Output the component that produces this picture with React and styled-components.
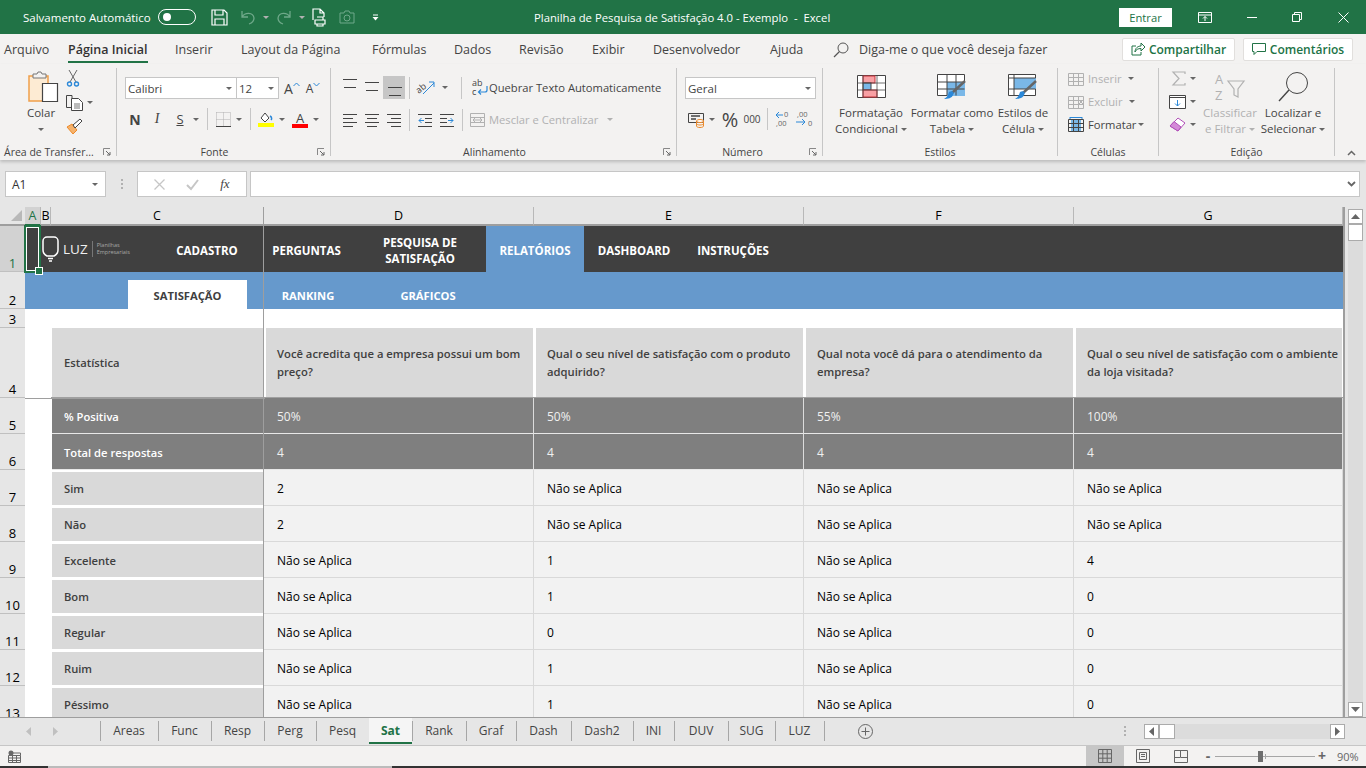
import React from 'react';
import styled, { createGlobalStyle } from 'styled-components';

const GREEN = '#217346';
const UI_FONT = '"Open Sans", "Noto Sans", sans-serif';

const GlobalStyle = createGlobalStyle`
  html, body { margin: 0; padding: 0; background: #e6e6e6; }
  * { box-sizing: border-box; }
  body { font-family: ${UI_FONT}; overflow: hidden; }
`;

const Page = styled.div`
  width: 1366px;
  height: 768px;
  display: flex;
  flex-direction: column;
  overflow: hidden;
`;

/* title bar */
const TitleBar = styled.div`
  height: 34px;
  background: ${GREEN};
  color: #fff;
  display: flex;
  align-items: center;
  font-size: 11.5px;
  flex: none;
`;
const AutoSave = styled.span`
  margin-left: 23px;
  width: 135px;
  flex: none;
  white-space: nowrap;
`;
const Toggle = styled.span`
  width: 38px;
  height: 16px;
  flex: none;
  border: 1px solid #fff;
  border-radius: 8px;
  display: flex;
  align-items: center;
  padding-left: 4px;
  &::before {
    content: '';
    width: 8px;
    height: 8px;
    border-radius: 50%;
    background: #fff;
  }
`;
const QuickSlot = styled.span`
  width: ${p => p.$w}px;
  display: flex;
  align-items: center;
  justify-content: center;
  flex: none;
`;
const Title = styled.span`
  width: 585px;
  flex: none;
  font-size: 11.3px;
  white-space: pre;
`;
const SignIn = styled.span`
  width: 53px;
  height: 19px;
  flex: none;
  background: #fff;
  color: ${GREEN};
  font-size: 11.2px;
  display: flex;
  align-items: center;
  justify-content: center;
`;

/* menu tabs */
const MenuBar = styled.div`
  height: 30px;
  background: #f3f2f1;
  display: flex;
  align-items: center;
  padding-left: 4px;
  flex: none;
  font-size: 12.5px;
  color: #444;
`;
const MenuItem = styled.span`
  width: ${p => p.$w}px;
  height: 30px;
  flex: none;
  white-space: nowrap;
  line-height: 32px;
  position: relative;
  ${p => p.$active && `
    color: #333;
    font-weight: 600;
    &::after {
      content: '';
      position: absolute;
      left: 0;
      bottom: 1px;
      width: 80px;
      height: 2px;
      background: ${GREEN};
    }
  `}
`;
const SearchHint = styled.span`
  display: flex;
  align-items: center;
  gap: 10px;
  width: 289px;
  flex: none;
  padding-top: 1px;
  white-space: nowrap;
`;
const PillButton = styled.span`
  width: ${p => p.$w}px;
  height: 23px;
  margin-right: 8px;
  background: #fff;
  border: 1px solid #e1dfdd;
  border-radius: 2px;
  color: ${GREEN};
  font-size: 12px;
  font-weight: 600;
  display: flex;
  align-items: center;
  justify-content: center;
  gap: 4px;
  flex: none;
`;

/* ribbon */
const Ribbon = styled.div`
  height: 96px;
  background: #f3f2f1;
  padding-top: 4px;
  display: flex;
  flex: none;
  position: relative;
  box-shadow: 0 2px 3px rgba(0, 0, 0, 0.18);
  z-index: 2;
`;
const Group = styled.div`
  width: ${p => p.$w}px;
  height: 88px;
  flex: none;
  position: relative;
  border-right: ${p => (p.$last ? 'none' : '1px solid #c6c6c6')};
  padding-left: ${p => p.$pad || 0}px;
`;
const Body = styled.div`
  height: 76px;
  display: flex;
  flex-direction: ${p => (p.$column ? 'column' : 'row')};
  ${p => p.$column && `gap: 9px; padding-top: ${p.$top || 9}px;`}
`;
const GroupLabel = styled.div`
  position: absolute;
  left: 0;
  right: 0;
  top: 76px;
  text-align: ${p => (p.$left ? 'left' : 'center')};
  padding-left: ${p => (p.$left ? '4px' : '0')};
  padding-right: ${p => p.$pr || 0}px;
  font-size: 10.5px;
  line-height: 16px;
  color: #444;
  white-space: nowrap;
`;
const Launcher = styled.span`
  position: absolute;
  right: ${p => p.$r || 5}px;
  top: 80px;
  width: 8px;
  height: 8px;
  display: flex;
`;
const Row = styled.div`
  display: flex;
  align-items: center;
  height: ${p => p.$h || 22}px;
`;
const Slot = styled.span`
  width: ${p => p.$w}px;
  height: ${p => p.$h || 22}px;
  flex: none;
  display: flex;
  align-items: center;
  justify-content: center;
  background: ${p => (p.$on ? '#c6c6c6' : 'transparent')};
  color: #444;
`;
const Separator = styled.span`
  width: ${p => p.$w}px;
  height: 22px;
  flex: none;
  display: flex;
  justify-content: center;
  &::before {
    content: '';
    width: 1px;
    height: 100%;
    background: #c6c6c6;
  }
`;
const Caret = styled.span`
  width: ${p => p.$w || 10}px;
  flex: none;
  display: flex;
  justify-content: center;
  &::before {
    content: '';
    border-left: 3px solid transparent;
    border-right: 3px solid transparent;
    border-top: 3px solid ${p => (p.$dim ? '#b1b1b1' : '#666')};
  }
`;
const Select = styled.span`
  width: ${p => p.$w}px;
  height: 22px;
  flex: none;
  margin-left: ${p => p.$ml || 0}px;
  background: #fff;
  border: 1px solid #c6c6c6;
  display: flex;
  align-items: center;
  padding-left: 2px;
  font-size: 11.5px;
  color: #444;
  span:first-child { flex: 1; }
`;
const ToolText = styled.span`
  font-size: ${p => p.$size || 11.2}px;
  color: ${p => (p.$dim ? '#b1b1b1' : '#444')};
  font-weight: ${p => (p.$bold ? 700 : 400)};
  font-style: ${p => (p.$italic ? 'italic' : 'normal')};
  text-decoration: ${p => (p.$under ? 'underline' : 'none')};
  font-family: ${p => (p.$serif ? '"Liberation Serif", serif' : 'inherit')};
  white-space: nowrap;
  margin-left: ${p => p.$ml || 0}px;
`;
const BigButton = styled.div`
  width: ${p => p.$w}px;
  flex: none;
  display: flex;
  flex-direction: column;
  align-items: center;
  font-size: 11.5px;
  line-height: 16px;
  color: ${p => (p.$dim ? '#b1b1b1' : '#444')};
  white-space: nowrap;
`;
const BigIcon = styled.div`
  height: 37px;
  padding-left: ${p => p.$shift || 0}px;
  display: flex;
  align-items: center;
  justify-content: center;
`;
const Label = styled.span`
  display: flex;
  align-items: center;
  gap: 3px;
  height: 16px;
`;
const StackColumn = styled.div`
  width: ${p => p.$w}px;
  flex: none;
  display: flex;
  flex-direction: column;
  gap: ${p => p.$gap || 2}px;
`;
const StackRow = styled.div`
  height: 21px;
  display: flex;
  align-items: center;
  padding-left: ${p => p.$pad || 0}px;
`;
const Collapse = styled.span`
  position: absolute;
  right: 10px;
  bottom: 4px;
  display: flex;
`;

/* formula bar */
const FormulaBar = styled.div`
  height: 47px;
  padding: 11px 6px 10px 5px;
  display: flex;
  background: #e6e6e6;
  flex: none;
`;
const NameBox = styled.div`
  width: 101px;
  height: 26px;
  background: #fff;
  border: 1px solid #c6c6c6;
  display: flex;
  align-items: center;
  justify-content: space-between;
  padding: 0 6px 0 6px;
  font-size: 12px;
  color: #333;
`;
const Grip = styled.div`
  width: ${p => p.$w || 31}px;
  height: ${p => p.$h || 26}px;
  flex: none;
  display: flex;
  flex-direction: column;
  align-items: center;
  justify-content: center;
  gap: 2px;
  span { width: 2px; height: 2px; background: #b1b1b1; }
`;
const FxBox = styled.div`
  width: 110px;
  height: 26px;
  background: #fff;
  border: 1px solid #c6c6c6;
  display: flex;
  align-items: center;
  justify-content: space-around;
  padding: 0 6px;
`;
const FormulaInput = styled.div`
  flex: 1;
  height: 26px;
  margin-left: 3px;
  background: #fff;
  border: 1px solid #c6c6c6;
  display: flex;
  align-items: center;
  justify-content: flex-end;
  padding-right: 3px;
`;

/* sheet */
const SheetArea = styled.div`
  height: 510px;
  display: flex;
  flex: none;
`;
const SheetClip = styled.div`
  width: 1345px;
  height: 510px;
  overflow: hidden;
  position: relative;
  flex: none;
  border-right: 2px solid #9e9e9e;
`;
const Grid = styled.div`
  display: grid;
  grid-template-columns: 25px 16px 10px 213px 270px 270px 270px 269px;
  grid-template-rows: 19px 46px 37px 19px 70px repeat(9, 36px);
  font-size: 12px;
  background: #fff;
`;
const ColHead = styled.div`
  background: ${p => (p.$on ? '#d2d2d2' : '#e6e6e6')};
  color: ${p => (p.$on ? GREEN : '#000')};
  border-bottom: 2px solid ${p => (p.$on ? GREEN : '#9e9e9e')};
  border-right: 1px solid #b8b8b8;
  font-size: 12.5px;
  display: flex;
  align-items: center;
  justify-content: center;
  position: relative;
`;
const Corner = styled.div`
  background: #e6e6e6;
  border-bottom: 2px solid #9e9e9e;
  display: flex;
  align-items: flex-end;
  justify-content: flex-end;
  padding: 0 3px 3px 0;
  &::before {
    content: '';
    border-left: 11px solid transparent;
    border-bottom: 11px solid #b8b8b8;
  }
`;
const RowHead = styled.div`
  background: ${p => (p.$on ? '#d2d2d2' : '#e6e6e6')};
  color: ${p => (p.$on ? GREEN : '#000')};
  border-bottom: 1px solid #c0c0c0;
  font-size: 13px;
  line-height: 15px;
  display: flex;
  align-items: flex-end;
  justify-content: center;
`;
const Nav = styled.div`
  grid-column: 2 / -1;
  background: #404040;
  display: flex;
  color: #fff;
  font-weight: 700;
  font-size: 11.5px;
`;
const NavItem = styled.div`
  width: ${p => p.$w}px;
  padding-right: ${p => p.$pr || 0}px;
  padding-top: 4px;
  flex: none;
  display: flex;
  align-items: center;
  justify-content: center;
  text-align: center;
  line-height: 16px;
  background: ${p => (p.$on ? '#6699cc' : 'transparent')};
`;
const LogoWrap = styled.div`
  width: 120px;
  padding-left: 17px;
  flex: none;
  display: flex;
  align-items: center;
  gap: 4px;
`;
const LogoWord = styled.span`
  font-size: 13.5px;
  font-weight: 400;
  color: #f0f0f0;
  padding-right: 4px;
  border-right: 1px solid #777;
  line-height: 16px;
`;
const LogoSub = styled.span`
  font-size: 5.5px;
  line-height: 7px;
  font-weight: 400;
  color: #a8a8a8;
`;
const SubNav = styled.div`
  grid-column: 2 / -1;
  background: #6699cc;
  display: flex;
  align-items: flex-end;
  padding-left: 103px;
  color: #fff;
  font-weight: 700;
  font-size: 11.2px;
`;
const SubTab = styled.div`
  width: 120px;
  height: 29px;
  padding-top: 2px;
  display: flex;
  align-items: center;
  justify-content: center;
  ${p => p.$on && 'background: #fff; color: #404040; width: 119px; margin-right: 1px;'}
`;
const Blank = styled.div`
  background: #fff;
  grid-column: ${p => p.$span || 'auto'};
`;
const HeadCell = styled.div`
  background: #d9d9d9;
  border: solid #fff;
  border-width: 0 1px 0 ${p => (p.$first ? '0' : '2px')};
  color: #404040;
  font-size: 11.25px;
  font-weight: 600;
  padding: 0 3px 0 ${p => (p.$first ? '12px' : '11px')};
  display: flex;
  align-items: center;
  line-height: 18px;
`;
const HeadWrap = styled.div`
  grid-column: ${p => p.$col};
  border-bottom: 1px solid #a0a0a0;
  display: flex;
  background: #fff;
  padding-left: ${p => p.$pad || 0}px;
  & > div { flex: 1; }
`;
const StatCell = styled.div`
  background: #7f7f7f;
  color: ${p => (p.$label ? '#fff' : '#f0f0f0')};
  font-size: ${p => (p.$label ? '11.2px' : '12px')};
  font-weight: ${p => (p.$label ? 600 : 400)};
  border-bottom: 1px solid #e8e8e8;
  border-right: ${p => (p.$label ? 'none' : '1px solid #dcdcdc')};
  margin-left: ${p => (p.$label ? '1px' : '0')};
  padding: 2px 0 0 ${p => (p.$label ? '12px' : '13px')};
  display: flex;
  align-items: center;
  grid-column: ${p => (p.$label ? '4' : 'auto')};
`;
const RowLabel = styled.div`
  grid-column: 4;
  margin-left: 1px;
  background: #d9d9d9;
  border-top: 2px solid #fff;
  border-bottom: 1px solid #fff;
  color: #404040;
  font-size: 11.2px;
  font-weight: 600;
  padding-left: 12px;
  display: flex;
  align-items: center;
`;
const ValueCell = styled.div`
  background: #f2f2f2;
  border-bottom: 1px solid #d9d9d9;
  border-right: 1px solid #d9d9d9;
  color: #000;
  padding: 2px 0 0 13px;
  display: flex;
  align-items: center;
`;
const FreezeV = styled.div`
  position: absolute;
  left: 263px;
  top: 0;
  bottom: 0;
  width: 1px;
  background: #9e9e9e;
`;
const FreezeH = styled.div`
  position: absolute;
  left: 25px;
  top: 191px;
  width: 240px;
  height: 1px;
  background: #9e9e9e;
`;
const CellCursor = styled.div`
  position: absolute;
  left: 24px;
  top: 18px;
  width: 17px;
  height: 48px;
  border: 2px solid ${GREEN};
  box-shadow: inset 0 0 0 1px #fff;
  &::after {
    content: '';
    position: absolute;
    right: -4px;
    bottom: -4px;
    width: 6px;
    height: 6px;
    background: ${GREEN};
    border: 1px solid #fff;
  }
`;
const VScroll = styled.div`
  width: 21px;
  height: 510px;
  background: #e6e6e6;
  padding: 2px 3px 0 3px;
  display: flex;
  flex-direction: column;
  flex: none;
`;
const ScrollBtn = styled.div`
  width: ${p => p.$w || 15}px;
  height: ${p => p.$h || 15}px;
  background: #fff;
  border: 1px solid #ababab;
  flex: none;
  display: flex;
  align-items: center;
  justify-content: center;
`;
const ScrollFill = styled.div`
  flex: 1;
  background: #dcdcdc;
`;

/* sheet tabs */
const TabsBar = styled.div`
  height: 28px;
  background: #e6e6e6;
  border-top: 1px solid #9e9e9e;
  display: flex;
  align-items: flex-start;
  flex: none;
  font-size: 12px;
  color: #444;
`;
const TabArrows = styled.div`
  width: 100px;
  height: 26px;
  flex: none;
  display: flex;
  align-items: center;
  padding-left: 26px;
  gap: 22px;
`;
const SheetTab = styled.div`
  width: ${p => p.$w}px;
  height: 26px;
  flex: none;
  padding-bottom: 2px;
  display: flex;
  align-items: center;
  justify-content: center;
  position: relative;
  ${p => p.$on
    ? `background: #f5f5f5; color: ${GREEN}; font-weight: 700; border-bottom: 2px solid ${GREEN}; padding-bottom: 0;`
    : `&::before {
        content: '';
        position: absolute;
        left: 0;
        top: 3px;
        height: 20px;
        width: 1px;
        background: #a6a6a6;
      }`}
`;
const TabEnd = styled.div`
  width: 1px;
  height: 20px;
  margin-top: 3px;
  background: #a6a6a6;
  flex: none;
`;
const AddSheet = styled.div`
  width: 280px;
  height: 26px;
  padding-left: 33px;
  display: flex;
  align-items: center;
  flex: none;
`;
const HScroll = styled.div`
  height: 15px;
  margin-top: 6px;
  display: flex;
  width: 201px;
  flex: none;
`;

/* status bar */
const StatusBar = styled.div`
  height: 21px;
  background: #f3f2f1;
  border-top: 1px solid #c6c6c6;
  display: flex;
  align-items: center;
  padding-left: 8px;
  flex: none;
`;
const ViewBtn = styled.span`
  width: 38px;
  height: 20px;
  display: flex;
  align-items: center;
  justify-content: center;
  background: ${p => (p.$on ? '#c6c6c6' : 'transparent')};
  flex: none;
`;
const ZoomTrack = styled.span`
  width: 100px;
  height: 1px;
  background: #a6a6a6;
  margin: 0 3px;
  position: relative;
  flex: none;
  &::before {
    content: '';
    position: absolute;
    left: 43px;
    top: -5px;
    width: 5px;
    height: 11px;
    background: #6e6e6e;
  }
  &::after {
    content: '';
    position: absolute;
    left: 50px;
    top: -2px;
    width: 1px;
    height: 5px;
    background: #a6a6a6;
  }
`;
const ZoomSign = styled.span`
  width: 8px;
  font-size: 14px;
  font-weight: 700;
  color: #666;
  display: flex;
  justify-content: center;
  line-height: 14px;
  flex: none;
`;
const ZoomText = styled.span`
  font-size: 11px;
  color: #666;
  margin-left: 11px;
  flex: none;
`;
const Taskbar = styled.div`
  height: 2px;
  flex: none;
  background: linear-gradient(to right, #333 48px, #bbb 48px, #bbb 392px, #333 392px);
`;

/* ribbon and chrome icons */
const Svg = ({ w, h, children, style, ...rest }) => (
  <svg width={w} height={h} viewBox={`0 0 ${w} ${h}`} fill="none" style={{ display: 'block', flex: 'none', overflow: 'visible', ...style }} {...rest}>
    {children}
  </svg>
);
const L = ({ ys, xs, c = '#444' }) => ys.map((y, i) => (
  <line key={y} x1={xs[i][0]} x2={xs[i][1]} y1={y + 0.5} y2={y + 0.5} stroke={c} />
));

const SaveIcon = () => (
  <Svg w={17} h={17}><path d="M1 1h12l3 3v12H1z M4 1v5h8V1 M4 16v-6h9v6" stroke="#fff" strokeWidth="1.2" /></Svg>
);
const UndoIcon = ({ flip }) => (
  <Svg w={16} h={16} style={{ transform: flip ? 'scaleX(-1)' : 'none' }}>
    <path d="M2 2v6h6 M2 8c3-5 11-5 12 1 0 3-2 5-5 6" stroke="#6fa98a" strokeWidth="1.3" />
  </Svg>
);
const PrintIcon = () => (
  <Svg w={15} h={19}><path d="M1 12V1h7l4 4v4 M8 1v4h4 M3 12h10v4H3z M5 9h6v3 M5 16v2h6v-2" stroke="#fff" strokeWidth="1.2" /></Svg>
);
const CameraIcon = () => (
  <Svg w={16} h={14}><path d="M1 3h4l1-2h4l1 2h4v10H1z" stroke="#6fa98a" /><circle cx="8" cy="8" r="3" stroke="#6fa98a" /></Svg>
);
const Customize = () => (
  <Svg w={7} h={7}><path d="M1 1h5" stroke="#fff" /><path d="M0.5 3h6L3.5 6.5z" fill="#fff" /></Svg>
);
const DisplayIcon = () => (
  <Svg w={14} h={11}><path d="M.5.5h13v10H.5z M.5 3h13" stroke="#fff" /><path d="M7 9V4.500M5 6.500l2-2 2 2" stroke="#fff" /></Svg>
);
const WinMin = () => <Svg w={10} h={1}><path d="M0 .5h10" stroke="#fff" /></Svg>;
const WinMax = () => <Svg w={10} h={10}><path d="M.5 2.500h7v7h-7z M2.500 2.500v-2h7v7h-2" stroke="#fff" /></Svg>;
const WinClose = () => <Svg w={11} h={11}><path d="M.5.500l10 10M10.500.500l-10 10" stroke="#fff" /></Svg>;
const SearchIcon = () => (
  <Svg w={16} h={16}><circle cx="10" cy="6" r="5" stroke="#555" /><path d="M6.500 9.500L1 15" stroke="#555" strokeWidth="1.2" /></Svg>
);
const ShareIcon = () => (
  <Svg w={14} h={14}><path d="M5 4H1v9h9v-3" stroke={GREEN} /><path d="M4 10c0-4 3-6 6-6V1l4 4-4 4V6.500c-3 0-5 1-6 3.500z" stroke={GREEN} /></Svg>
);
const CommentIcon = () => (
  <Svg w={14} h={13}><path d="M.5.500h13v8H5l-3 3v-3H.5z" stroke={GREEN} /></Svg>
);
const PasteIcon = () => (
  <Svg w={30} h={31}>
    <path d="M1 5h19v25H1z" fill="#fdebd3" stroke="#f0a04b" strokeWidth="1.5" />
    <path d="M5 3h4l1-2h3l1 2h4v4H5z" fill="#f3f2f1" stroke="#777" />
    <path d="M14.500 12.500h15v18h-15z" fill="#fff" stroke="#444" strokeWidth="1.2" />
  </Svg>
);
const CutIcon = () => (
  <Svg w={12} h={17}>
    <path d="M2 0l7 12M10 0L3 12" stroke="#666" />
    <circle cx="2.500" cy="14" r="2" stroke="#2b88d8" strokeWidth="1.4" />
    <circle cx="9.500" cy="14" r="2" stroke="#2b88d8" strokeWidth="1.4" />
  </Svg>
);
const CopyIcon = () => (
  <Svg w={17} h={16}>
    <path d="M6 3V.5H.5v12H5" stroke="#444" />
    <path d="M5.500 3.500h7l4 4v8h-11z" fill="#fff" stroke="#444" />
    <path d="M8 9h6M8 11h6M8 13h6" stroke="#777" />
  </Svg>
);
const BrushIcon = () => (
  <Svg w={17} h={16}>
    <path d="M1 8l5-3 5 6-4 4z" fill="#f6b26b" stroke="#ed8a2a" />
    <path d="M7 6l2 3 7-7-2-2z" fill="#fff" stroke="#444" />
  </Svg>
);
const BorderIcon = () => (
  <Svg w={15} h={15}>
    <path d="M.5.500h14M.5 7.500h14M.5.500v14M7.500.500v14M14.500.500v14" stroke="#b1b1b1" strokeDasharray="1 1" />
    <path d="M0 14.500h15" stroke="#444" />
  </Svg>
);
const FillIcon = () => (
  <Svg w={16} h={16}>
    <path d="M3 7l4-5 4 5-4 4z" stroke="#444" fill="#fff" />
    <path d="M12 5c2 1 2 3 1 4" stroke="#2b88d8" strokeWidth="1.5" />
    <rect y="12" width="16" height="4" fill="#ffff00" />
  </Svg>
);
const FontColor = () => (
  <Svg w={16} h={17}>
    <text x="8" y="12" textAnchor="middle" fontSize="13" fill="#444" fontFamily="Open Sans">A</text>
    <rect y="13" width="16" height="4" fill="#ff0000" />
  </Svg>
);
const Chevron = ({ up }) => (
  <Svg w={7} h={5} style={{ marginBottom: 8 }}><path d={up ? 'M.5 4l3-3 3 3' : 'M.5 1l3 3 3-3'} stroke="#2b88d8" strokeWidth="1" /></Svg>
);
const AlignIcon = ({ ys, xs, h = 14 }) => <Svg w={14} h={h}><L ys={ys} xs={xs} /></Svg>;
const Orient = () => (
  <Svg w={18} h={16}>
    <text x="0" y="11" fontSize="9" fill="#444" fontFamily="Open Sans" transform="rotate(-40 5 10)">ab</text>
    <path d="M6 14L17 3M12 2h5v5" stroke="#2b88d8" />
  </Svg>
);
const IndentIcon = ({ flip }) => (
  <Svg w={14} h={14} style={{ transform: flip ? 'scaleX(-1)' : 'none' }}>
    <path d="M0 1.500h14M7 5.500h7M7 9.500h7M0 13.500h14" stroke="#444" />
    <path d="M6 7.500H1M3.500 5l-2.500 2.500 2.500 2.500" stroke="#2b88d8" />
  </Svg>
);
const WrapIcon = () => (
  <Svg w={16} h={17}>
    <text x="0" y="7" fontSize="9" fill="#444" fontFamily="Open Sans">ab</text>
    <text x="0" y="16" fontSize="9" fill="#444" fontFamily="Open Sans">c</text>
    <path d="M15 7v4a2 2 0 0 1-2 2H7M9 10.500L6.500 13 9 15.500" stroke="#2b88d8" strokeWidth="1.2" />
  </Svg>
);
const MergeIcon = () => (
  <Svg w={15} h={14}><path d="M.5.500h14v13H.5zM.5 4.500h14M.5 9.500h14" stroke="#b1b1b1" /><path d="M3 7h9M5 5L3 7l2 2M10 5l2 2-2 2" stroke="#b1b1b1" /></Svg>
);
const MoneyIcon = () => (
  <Svg w={17} h={17}>
    <path d="M.5 2.500h15v9H.5z" stroke="#444" />
    <path d="M3 5h9M3 8h5" stroke="#444" strokeWidth="1.5" />
    <ellipse cx="12" cy="10" rx="3.500" ry="1.500" fill="#fff" stroke="#ed8a2a" />
    <path d="M8.500 10v5c0 2 7 2 7 0v-5M8.500 12.500c0 2 7 2 7 0" stroke="#ed8a2a" />
  </Svg>
);
const DecimalIcon = ({ more }) => (
  <Svg w={18} h={18}>
    <text x={more ? 1 : 9} y="7" fontSize="7.500" fill="#666" fontFamily="Open Sans">{more ? ',00' : '0'}</text>
    <text x={more ? 12 : 1} y="16" fontSize="7.500" fill="#666" fontFamily="Open Sans">{more ? '0' : ',00'}</text>
    {more
      ? <path d="M0 12h9M6 9l3 3-3 3" stroke="#2b88d8" />
      : <path d="M8 5H1M4 2L1 5l3 3" stroke="#2b88d8" />}
  </Svg>
);
const CondFormat = () => (
  <Svg w={29} h={23}>
    <path d="M.5.500h28v22H.5z" fill="#fff" stroke="#444" />
    <rect x="6" y="1" width="12" height="7" fill="#f8a0a4" stroke="#c8323a" />
    <rect x="6" y="8" width="8" height="7" fill="#7ab8e8" stroke="#444" />
    <rect x="6" y="15" width="14" height="7" fill="#f8a0a4" stroke="#c8323a" />
    <path d="M.5 8h28M.5 15h28M6 .500v22M20 .500v22" stroke="#444" strokeOpacity=".75" />
  </Svg>
);
const TableFormat = ({ cell }) => (
  <Svg w={30} h={26}>
    <path d="M.5.500h27v21H.5z" fill="#fff" stroke="#444" />
    {cell
      ? <rect x="6" y="4" width="22" height="11" fill="#7ab8e8" />
      : <rect x="10" y="8" width="18" height="14" fill="#7ab8e8" />}
    <path d={cell ? 'M.5 4h27M.5 15h27M6 .500v21' : 'M.5 8h27M.5 15h27M10 .500v21M19 .500v21'} stroke="#444" />
    <path d="M28 7L15 19" stroke="#666" strokeWidth="2.500" />
    <path d="M12 18c3-2 6 0 4 3-1 3-5 4-9 4 2-1 4-3 5-7z" fill="#2b88d8" />
  </Svg>
);
const CellIcon = ({ kind, dim }) => {
  const c = dim ? '#b1b1b1' : '#444';
  return (
    <Svg w={16} h={16}>
      {kind === 'fmt' && <rect x="3" y="3" width="10" height="11" fill="#7ab8e8" />}
      <path d="M.5 2.500h15v12H.5zM.5 6.500h15M.5 10.500h15M5.500 2.500v12M10.500 2.500v12" stroke={c} />
      {kind === 'fmt' && <path d="M2 .500h12M2 0v2M14 0v2" stroke="#2b88d8" />}
      {kind === 'del' && <path d="M11 6l4 4M15 6l-4 4" stroke="#b1b1b1" />}
    </Svg>
  );
};
const SumIcon = () => <Svg w={14} h={15}><path d="M13 3V1H1l6 6.500L1 14h12v-2" stroke="#b1b1b1" strokeWidth="1.2" /></Svg>;
const FillDown = () => (
  <Svg w={17} h={14}><path d="M.5.500h16v13H.5z" fill="#fff" stroke="#444" /><path d="M.5 2.500h16" stroke="#444" /><path d="M8.500 5v6M6 8.500l2.500 2.500L11 8.500" stroke="#2b88d8" /></Svg>
);
const Eraser = () => (
  <Svg w={17} h={15}><path d="M9 1l7 5-7 8-8-5z" fill="#fff" stroke="#b14fb8" /><path d="M5 4.500L12 10l-3 4-8-5z" fill="#d48ad8" stroke="#b14fb8" /></Svg>
);
const SortIcon = () => (
  <Svg w={30} h={29}>
    <text x="0" y="12" fontSize="13" fill="#b1b1b1" fontFamily="Open Sans">A</text>
    <text x="0" y="28" fontSize="13" fill="#b1b1b1" fontFamily="Open Sans">Z</text>
    <path d="M13 9h16l-6 8v8l-4 -2v-6z" stroke="#b1b1b1" strokeWidth="1.2" />
  </Svg>
);
const FindIcon = () => (
  <Svg w={31} h={32}><circle cx="19" cy="12" r="10.500" stroke="#444" /><path d="M11 19L1 30" stroke="#444" strokeWidth="1.400" /></Svg>
);
const LauncherIcon = () => (
  <Svg w={8} h={8}><path d="M.5 7V.5H7" stroke="#888" /><path d="M3 3l4 4M7 4v3H4" stroke="#666" /></Svg>
);
const CollapseIcon = () => <Svg w={9} h={6}><path d="M1 5l3.500-3.500L8 5" stroke="#666" strokeWidth="1.500" /></Svg>;
const XMark = () => <Svg w={11} h={11}><path d="M.5.500l10 10M10.500.500l-10 10" stroke="#c6c6c6" strokeWidth="1.300" /></Svg>;
const CheckMark = () => <Svg w={13} h={11}><path d="M1 6l4 4 7-9" stroke="#c6c6c6" strokeWidth="2" /></Svg>;
const DownChevron = () => <Svg w={9} h={6}><path d="M1 1l3.500 3.500L8 1" stroke="#666" strokeWidth="1.800" /></Svg>;
const LogoBulb = () => (
  <Svg w={17} h={26}>
    <path d="M5 1h7a4 4 0 0 1 4 4v9c0 3-2 5-4 6H5c-2-1-4-3-4-6V5a4 4 0 0 1 4-4z" stroke="#fff" strokeWidth="1.500" />
    <path d="M6 22.500h5M7 25h3" stroke="#fff" strokeWidth="1.300" />
  </Svg>
);
const Tri = ({ dir, c = '#666' }) => {
  const d = { up: 'M0 5l4.500-5L9 5z', down: 'M0 0l4.500 5L9 0z', left: 'M5 0v9L0 4.500z', right: 'M0 0v9l5-4.500z' }[dir];
  const vert = dir === 'up' || dir === 'down';
  return <Svg w={vert ? 9 : 5} h={vert ? 5 : 9}><path d={d} fill={c} /></Svg>;
};
const PlusCircle = () => (
  <Svg w={15} h={15}><circle cx="7.500" cy="7.500" r="7" stroke="#666" /><path d="M3.500 7.500h8M7.500 3.500v8" stroke="#666" /></Svg>
);
const MacroIcon = () => (
  <Svg w={13} h={13}>
    <circle cx="3" cy="3" r="2.500" fill="#666" />
    <path d="M.5 5.500h12v7H.5zM3 3h9.500v2.500" stroke="#666" />
    <path d="M.5 8h12M.5 10.500h12M4.500 5.500v7M8.500 5.500v7" stroke="#666" />
  </Svg>
);
const GridView = () => <Svg w={14} h={14}><path d="M.5.500h13v13H.5zM.5 4.800h13M.5 9.200h13M4.800.500v13M9.200.500v13" stroke="#666" /></Svg>;
const PageView = () => <Svg w={14} h={14}><path d="M.5.500h13v13H.5zM3.500 3.500h7v7h-7zM5 5.500h4M5 7.500h4" stroke="#666" /></Svg>;
const BreakView = () => <Svg w={14} h={13}><path d="M.5.500h13v12H.5zM.5 7.500h6v-7M7 7.500h6.500" stroke="#666" /></Svg>;

const MENU = [
  ['Arquivo', 64], ['Página Inicial', 107, true], ['Inserir', 66], ['Layout da Página', 131], ['Fórmulas', 82],
  ['Dados', 65], ['Revisão', 73], ['Exibir', 61], ['Desenvolvedor', 117], ['Ajuda', 63],
];
const COLS = ['D', 'E', 'F', 'G'];
const QUESTIONS = [
  'Você acredita que a empresa possui um bom preço?',
  'Qual o seu nível de satisfação com o produto adquirido?',
  'Qual nota você dá para o atendimento da empresa?',
  'Qual o seu nível de satisfação com o ambiente da loja visitada?',
];
const NA = 'Não se Aplica';
const STATS = [
  ['% Positiva', ['50%', '50%', '55%', '100%']],
  ['Total de respostas', ['4', '4', '4', '4']],
];
const ROWS = [
  ['Sim', ['2', NA, NA, NA]],
  ['Não', ['2', NA, NA, NA]],
  ['Excelente', [NA, '1', NA, '4']],
  ['Bom', [NA, '1', NA, '0']],
  ['Regular', [NA, '0', NA, '0']],
  ['Ruim', [NA, '1', NA, '0']],
  ['Péssimo', [NA, '1', NA, '0']],
];
const SHEETS = [
  ['Areas', 58], ['Func', 53], ['Resp', 53], ['Perg', 52], ['Pesq', 53], ['Sat', 43, true], ['Rank', 54], ['Graf', 50],
  ['Dash', 55], ['Dash2', 62], ['INI', 41], ['DUV', 54], ['SUG', 47], ['LUZ', 49],
];

const TopBar = () => (
  <TitleBar>
    <AutoSave>Salvamento Automático</AutoSave>
    <Toggle />
    <QuickSlot $w={15} />
    <SaveIcon />
    <QuickSlot $w={12} />
    <UndoIcon />
    <QuickSlot $w={20}><Caret $w={8} $dim /></QuickSlot>
    <UndoIcon flip />
    <QuickSlot $w={20}><Caret $w={8} $dim /></QuickSlot>
    <PrintIcon />
    <QuickSlot $w={12} />
    <CameraIcon />
    <QuickSlot $w={40}><Customize /></QuickSlot>
    <QuickSlot $w={139} />
    <Title>Planilha de Pesquisa de Satisfação 4.0 - Exemplo  -  Excel</Title>
    <SignIn>Entrar</SignIn>
    <QuickSlot $w={26} />
    <DisplayIcon />
    <QuickSlot $w={35} />
    <WinMin />
    <QuickSlot $w={35} />
    <WinMax />
    <QuickSlot $w={36} />
    <WinClose />
  </TitleBar>
);

const Menu = () => (
  <MenuBar>
    {MENU.map(([text, w, active]) => <MenuItem key={text} $w={w} $active={active}>{text}</MenuItem>)}
    <SearchHint><SearchIcon />Diga-me o que você deseja fazer</SearchHint>
    <PillButton $w={113}><ShareIcon />Compartilhar</PillButton>
    <PillButton $w={110}><CommentIcon />Comentários</PillButton>
  </MenuBar>
);

const RibbonBar = () => (
  <Ribbon>
    <Group $w={117} $pad={16}>
      <Body>
        <BigButton $w={50}>
          <BigIcon $shift={3}><PasteIcon /></BigIcon>
          <Label>Colar</Label>
          <Label><Caret /></Label>
        </BigButton>
        <StackColumn $w={40} $gap={3}>
          <StackRow $pad={1}><CutIcon /></StackRow>
          <StackRow><CopyIcon /><Caret $w={14} /></StackRow>
          <StackRow><BrushIcon /></StackRow>
        </StackColumn>
      </Body>
      <GroupLabel $left>Área de Transfer...</GroupLabel>
      <Launcher><LauncherIcon /></Launcher>
    </Group>

    <Group $w={214} $pad={8}>
      <Body $column>
        <Row>
          <Select $w={112}><span>Calibri</span><Caret $w={14} /></Select>
          <Select $w={43} $ml={-1}><span>12</span><Caret $w={14} /></Select>
          <Slot $w={26}><ToolText $size={14}>A</ToolText><Chevron up /></Slot>
          <Slot $w={16}><ToolText $size={12}>A</ToolText><Chevron /></Slot>
        </Row>
        <Row>
          <Slot $w={20}><ToolText $size={14} $bold>N</ToolText></Slot>
          <Slot $w={24}><ToolText $size={14} $italic $serif>I</ToolText></Slot>
          <Slot $w={22}><ToolText $size={13} $under>S</ToolText></Slot>
          <Caret />
          <Separator $w={12} />
          <Slot $w={20}><BorderIcon /></Slot>
          <Caret $w={12} />
          <Separator $w={10} />
          <Slot $w={22}><FillIcon /></Slot>
          <Caret />
          <Slot $w={26}><FontColor /></Slot>
          <Caret $w={6} />
        </Row>
      </Body>
      <GroupLabel $pr={18}>Fonte</GroupLabel>
      <Launcher><LauncherIcon /></Launcher>
    </Group>

    <Group $w={346} $pad={8}>
      <Body $column $top={8}>
        <Row $h={23}>
          <Slot $w={22} $h={23}><AlignIcon h={18} ys={[0, 8]} xs={[[0, 14], [1, 13]]} /></Slot>
          <Slot $w={22} $h={23}><AlignIcon h={18} ys={[3, 11]} xs={[[0, 14], [1, 13]]} /></Slot>
          <Slot $w={22} $h={23} $on><AlignIcon h={18} ys={[8, 16]} xs={[[1, 15], [2, 14]]} /></Slot>
          <Separator $w={8} />
          <Slot $w={26} $h={23}><Orient /></Slot>
          <Caret $w={12} />
          <Separator $w={21} />
          <WrapIcon />
          <ToolText $ml={1}>Quebrar Texto Automaticamente</ToolText>
        </Row>
        <Row $h={23}>
          <Slot $w={22} $h={23}><AlignIcon ys={[1, 5, 9, 13]} xs={[[0, 14], [0, 10], [0, 14], [0, 10]]} /></Slot>
          <Slot $w={22} $h={23}><AlignIcon ys={[1, 5, 9, 13]} xs={[[0, 14], [2, 12], [0, 14], [2, 12]]} /></Slot>
          <Slot $w={22} $h={23}><AlignIcon ys={[1, 5, 9, 13]} xs={[[0, 14], [4, 14], [0, 14], [4, 14]]} /></Slot>
          <Separator $w={8} />
          <Slot $w={24} $h={23}><IndentIcon /></Slot>
          <Slot $w={20} $h={23}><IndentIcon flip /></Slot>
          <Separator $w={11} />
          <Slot $w={19} $h={23}><MergeIcon /></Slot>
          <ToolText $ml={2} $dim>Mesclar e Centralizar</ToolText>
          <Caret $w={24} $dim />
        </Row>
      </Body>
      <GroupLabel $pr={18}>Alinhamento</GroupLabel>
      <Launcher><LauncherIcon /></Launcher>
    </Group>

    <Group $w={146} $pad={8}>
      <Body $column>
        <Row>
          <Select $w={131}><span>Geral</span><Caret $w={14} /></Select>
        </Row>
        <Row>
          <Slot $w={22}><MoneyIcon /></Slot>
          <Caret />
          <Slot $w={26}><ToolText $size={20}>%</ToolText></Slot>
          <Slot $w={18}><ToolText $size={10}>000</ToolText></Slot>
          <Separator $w={12} />
          <Slot $w={22}><DecimalIcon /></Slot>
          <Slot $w={20}><DecimalIcon more /></Slot>
        </Row>
      </Body>
      <GroupLabel $pr={14}>Número</GroupLabel>
      <Launcher><LauncherIcon /></Launcher>
    </Group>

    <Group $w={235} $pad={8}>
      <Body>
        <BigButton $w={80}>
          <BigIcon><CondFormat /></BigIcon>
          <Label>Formatação</Label>
          <Label>Condicional<Caret $w={6} /></Label>
        </BigButton>
        <BigButton $w={82}>
          <BigIcon><TableFormat /></BigIcon>
          <Label>Formatar como</Label>
          <Label>Tabela<Caret $w={6} /></Label>
        </BigButton>
        <BigButton $w={60}>
          <BigIcon><TableFormat cell /></BigIcon>
          <Label>Estilos de</Label>
          <Label>Célula<Caret $w={6} /></Label>
        </BigButton>
      </Body>
      <GroupLabel>Estilos</GroupLabel>
    </Group>

    <Group $w={101} $pad={10}>
      <Body>
        <StackColumn $w={90}>
          <StackRow><CellIcon dim /><ToolText $ml={4} $dim>Inserir</ToolText><Caret $w={18} /></StackRow>
          <StackRow><CellIcon kind="del" dim /><ToolText $ml={4} $dim>Excluir</ToolText><Caret $w={18} /></StackRow>
          <StackRow><CellIcon kind="fmt" /><ToolText $ml={4}>Formatar</ToolText><Caret /></StackRow>
        </StackColumn>
      </Body>
      <GroupLabel>Células</GroupLabel>
    </Group>

    <Group $w={176} $pad={10}>
      <Body>
        <StackColumn $w={34}>
          <StackRow $pad={3}><SumIcon /><Caret $w={14} /></StackRow>
          <StackRow><FillDown /><Caret $w={14} /></StackRow>
          <StackRow><Eraser /><Caret $w={14} /></StackRow>
        </StackColumn>
        <BigButton $w={54} $dim>
          <BigIcon><SortIcon /></BigIcon>
          <Label>Classificar</Label>
          <Label>e Filtrar<Caret $w={6} $dim /></Label>
        </BigButton>
        <BigButton $w={72}>
          <BigIcon><FindIcon /></BigIcon>
          <Label>Localizar e</Label>
          <Label>Selecionar<Caret $w={6} /></Label>
        </BigButton>
      </Body>
      <GroupLabel>Edição</GroupLabel>
    </Group>
    <Collapse><CollapseIcon /></Collapse>
  </Ribbon>
);

const Formula = () => (
  <FormulaBar>
    <NameBox>A1<Caret $w={8} /></NameBox>
    <Grip><span /><span /><span /></Grip>
    <FxBox>
      <XMark />
      <CheckMark />
      <ToolText $size={13} $italic $serif>fx</ToolText>
    </FxBox>
    <FormulaInput><DownChevron /></FormulaInput>
  </FormulaBar>
);

const Sheet = () => (
  <SheetArea>
    <SheetClip>
      <Grid>
        <Corner />
        <ColHead $on>A</ColHead>
        <ColHead>B</ColHead>
        <ColHead>C</ColHead>
        {COLS.map(c => <ColHead key={c}>{c}</ColHead>)}

        <RowHead $on>1</RowHead>
        <Nav>
          <LogoWrap>
            <LogoBulb />
            <LogoWord>LUZ</LogoWord>
            <LogoSub>Planilhas<br />Empresariais</LogoSub>
          </LogoWrap>
          <NavItem $w={124}>CADASTRO</NavItem>
          <NavItem $w={85} $pr={10}>PERGUNTAS</NavItem>
          <NavItem $w={132}>PESQUISA DE<br />SATISFAÇÃO</NavItem>
          <NavItem $w={98} $on>RELATÓRIOS</NavItem>
          <NavItem $w={100}>DASHBOARD</NavItem>
          <NavItem $w={98}>INSTRUÇÕES</NavItem>
        </Nav>

        <RowHead>2</RowHead>
        <SubNav>
          <SubTab $on>SATISFAÇÃO</SubTab>
          <SubTab>RANKING</SubTab>
          <SubTab>GRÁFICOS</SubTab>
        </SubNav>

        <RowHead>3</RowHead>
        <Blank $span="2 / -1" />

        <RowHead>4</RowHead>
        <Blank $span="2 / 4" />
        <HeadWrap $col="4" $pad={1}><HeadCell $first>Estatística</HeadCell></HeadWrap>
        {QUESTIONS.map(q => <HeadWrap key={q} $col="auto"><HeadCell>{q}</HeadCell></HeadWrap>)}

        {STATS.map(([label, values], i) => (
          <React.Fragment key={label}>
            <RowHead>{i + 5}</RowHead>
            <Blank $span="2 / 4" />
            <StatCell $label>{label}</StatCell>
            {values.map((v, j) => <StatCell key={COLS[j]}>{v}</StatCell>)}
          </React.Fragment>
        ))}

        {ROWS.map(([label, values], i) => (
          <React.Fragment key={label}>
            <RowHead>{i + 7}</RowHead>
            <Blank $span="2 / 4" />
            <RowLabel>{label}</RowLabel>
            {values.map((v, j) => <ValueCell key={COLS[j]}>{v}</ValueCell>)}
          </React.Fragment>
        ))}
      </Grid>
      <FreezeV />
      <FreezeH />
      <CellCursor />
    </SheetClip>
    <VScroll>
      <ScrollBtn><Tri dir="up" /></ScrollBtn>
      <ScrollBtn $h={17} />
      <ScrollFill />
      <ScrollBtn><Tri dir="down" /></ScrollBtn>
    </VScroll>
  </SheetArea>
);

const Tabs = () => (
  <TabsBar>
    <TabArrows><Tri dir="left" c="#c0c0c0" /><Tri dir="right" c="#c0c0c0" /></TabArrows>
    {SHEETS.map(([name, w, on]) => <SheetTab key={name} $w={w} $on={on}>{name}</SheetTab>)}
    <TabEnd />
    <AddSheet><PlusCircle /></AddSheet>
    <Grip $w={39}><span /><span /><span /></Grip>
    <HScroll>
      <ScrollBtn><Tri dir="left" /></ScrollBtn>
      <ScrollBtn $w={16} />
      <ScrollFill />
      <ScrollBtn><Tri dir="right" /></ScrollBtn>
    </HScroll>
  </TabsBar>
);

const Status = () => (
  <StatusBar>
    <MacroIcon />
    <QuickSlot $w={1065} />
    <ViewBtn $on><GridView /></ViewBtn>
    <ViewBtn><PageView /></ViewBtn>
    <ViewBtn><BreakView /></ViewBtn>
    <QuickSlot $w={4} />
    <ZoomSign>-</ZoomSign>
    <ZoomTrack />
    <ZoomSign>+</ZoomSign>
    <ZoomText>90%</ZoomText>
  </StatusBar>
);

const App = () => (
  <Page>
    <GlobalStyle />
    <TopBar />
    <Menu />
    <RibbonBar />
    <Formula />
    <Sheet />
    <Tabs />
    <Status />
    <Taskbar />
  </Page>
);

export default App;
